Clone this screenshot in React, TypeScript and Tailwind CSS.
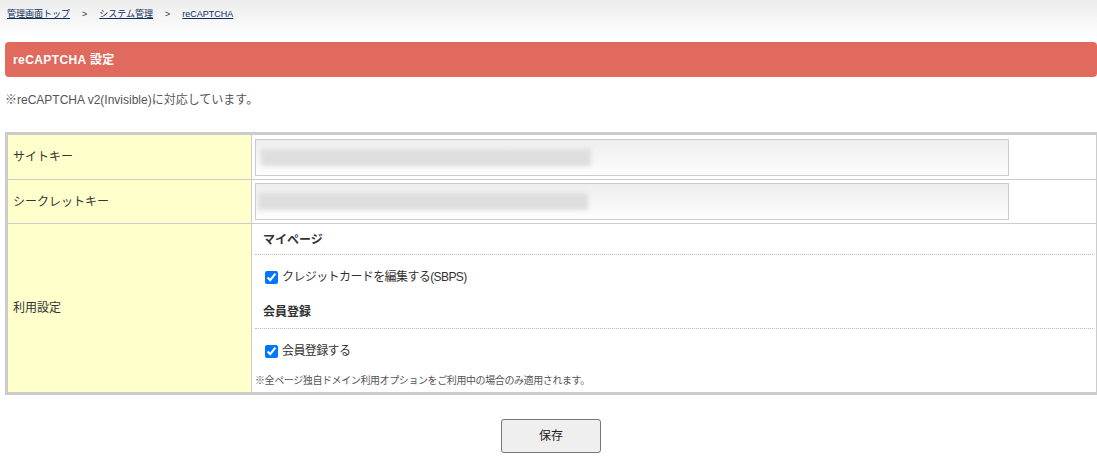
const font = { fontFamily: '"Liberation Sans", "Noto Sans CJK JP", sans-serif' }

function KeyInput({ pad }: { pad: string }) {
  return (
    <div
      className={`h-[37px] w-[754px] border border-[#cccccc] bg-gradient-to-b from-[#eeeeee] to-[#fdfdfd] ${pad}`}
    >
      {/* masked key value */}
      <div className="h-[17px] w-[330px] bg-[#dedede] blur-[2px]" />
    </div>
  )
}

function CheckRow({ label }: { label: string }) {
  return (
    <label className="h-[44px] flex items-center pl-[10px] text-[12px] tracking-[-0.6px] text-[#333]">
      <input type="checkbox" defaultChecked className="w-[13px] h-[13px] m-0 mr-[4px]" />
      {label}
    </label>
  )
}

export default function App() {
  return (
    <div className="w-full overflow-hidden bg-white text-[12px] text-[#333]" style={font}>
      {/* breadcrumb */}
      <div className="h-[36px] bg-gradient-to-b from-[#ececec] to-white pt-[7px] pl-[7px] flex items-start text-[9px] leading-[14px]">
        <a href="#" className="text-[#0b2d5c] underline">管理画面トップ</a>
        <span className="mx-[12px] text-[#333]">&gt;</span>
        <a href="#" className="text-[#0b2d5c] underline">システム管理</a>
        <span className="mx-[12px] text-[#333]">&gt;</span>
        <a href="#" className="text-[#0b2d5c] underline">reCAPTCHA</a>
      </div>

      <div className="pl-[5px] pt-[6px]">
        <div className="h-[35px] rounded-[4px] bg-[#df6a5d] flex items-center pl-[8px] text-white font-bold text-[12px] tracking-[0.4px]">
          reCAPTCHA 設定
        </div>

        <p className="mt-[16px] leading-[14px] text-[#555]">※reCAPTCHA v2(Invisible)に対応しています。</p>

        <div className="mt-[25px] w-[calc(100%+2px)] border-[3px] border-[#cccccc] grid grid-cols-[244px_1fr]">
          {/* row 1 */}
          <div className="bg-[#ffffcc] border-r border-b border-[#cccccc] flex items-center pl-[5px]">サイトキー</div>
          <div className="border-b border-[#cccccc] pl-[3px] pt-[4px] pb-[3px]">
            <KeyInput pad="pl-[5px] pt-[9px]" />
          </div>

          {/* row 2 */}
          <div className="bg-[#ffffcc] border-r border-b border-[#cccccc] flex items-center pl-[5px]">シークレットキー</div>
          <div className="border-b border-[#cccccc] pl-[3px] py-[3px]">
            <KeyInput pad="pl-[2px] pt-[9px]" />
          </div>

          {/* row 3 */}
          <div className="bg-[#ffffcc] border-r border-[#cccccc] flex items-center pl-[5px]">利用設定</div>
          <div className="h-[168px] pl-[3px] pr-[3px]">
            <div className="pt-[9px] pb-[7px] pl-[8px] leading-[14px] font-bold border-b border-dotted border-[#bbbbbb]">
              マイページ
            </div>
            <CheckRow label="クレジットカードを編集する(SBPS)" />
            <div className="pt-[6px] pb-[9px] pl-[8px] leading-[14px] font-bold border-b border-dotted border-[#bbbbbb]">
              会員登録
            </div>
            <CheckRow label="会員登録する" />
            <p className="mt-[1px] leading-[14px] text-[10px] tracking-[-0.4px] text-[#555]">
              ※全ページ独自ドメイン利用オプションをご利用中の場合のみ適用されます。
            </p>
          </div>
        </div>

        <div className="flex justify-center pt-[24px] pb-[20px]">
          <button
            type="button"
            className="w-[100px] h-[34px] rounded-[3px] border border-[#767676] bg-[#efefef] text-[12px] text-[#222]"
          >
            保存
          </button>
        </div>
      </div>
    </div>
  )
}
